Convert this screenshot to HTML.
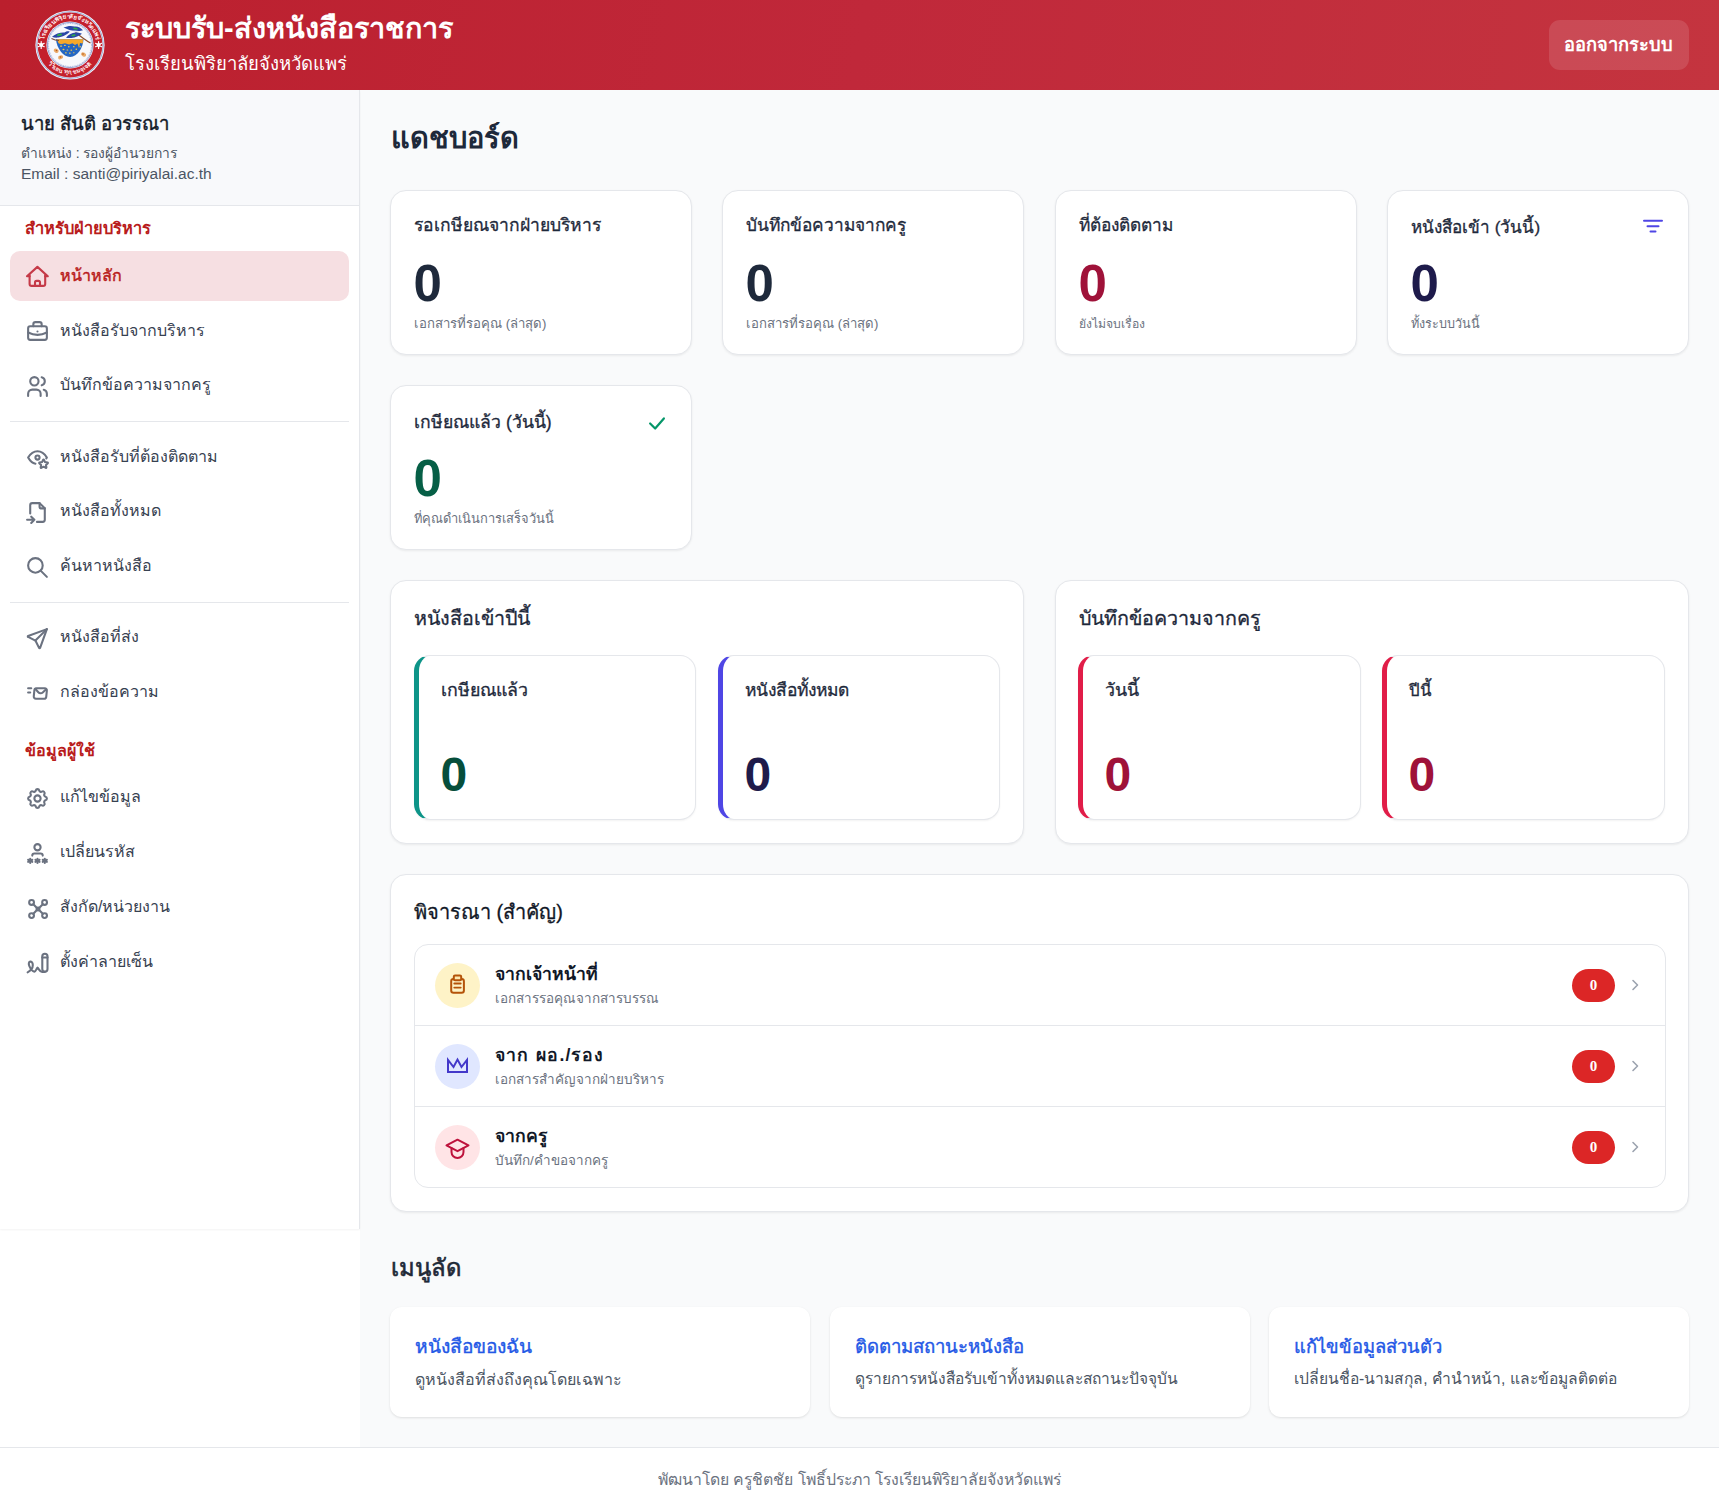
<!DOCTYPE html>
<html lang="th">
<head>
<meta charset="utf-8">
<title>ระบบรับ-ส่งหนังสือราชการ</title>
<style>
*{box-sizing:border-box;margin:0;padding:0}
html,body{width:1719px;height:1512px;overflow:hidden;background:#fff}
body{font-family:"Liberation Sans",sans-serif;position:relative;color:#1f2937}
.abs{position:absolute}
.t{position:absolute;white-space:nowrap;line-height:1}
/* header */
#hdr{left:0;top:0;width:1719px;height:90px;background:linear-gradient(100deg,#bb1f2d 0%,#c0283a 50%,#c4343f 100%)}
#logout{left:1549px;top:20px;width:140px;height:50px;border-radius:11px;background:rgba(255,255,255,0.12)}
/* sidebar */
#side{left:0;top:90px;width:360px;height:1139px;background:#fff;border-right:1px solid #e5e7eb;box-shadow:0 1px 2px rgba(0,0,0,0.05)}
#user{left:0;top:90px;width:359px;height:116px;background:#f8f9fb;border-bottom:1px solid #e5e7eb}
.nav-ic{position:absolute;width:25px;height:25px;left:24.6px}
.nav-ic svg{width:25px;height:25px;display:block}
.divider{position:absolute;left:10px;width:339px;height:1px;background:#e5e7eb}
/* main */
#main{left:360px;top:90px;width:1359px;height:1357px;background:#f9fafb}
.card{position:absolute;background:#fff;border:1px solid #e5e7eb;border-radius:16px;box-shadow:0 1px 3px rgba(0,0,0,0.04),0 1px 2px rgba(0,0,0,0.03)}
.stitle{font-weight:400;color:#1e293b;-webkit-text-stroke:0.3px currentColor}
.semi{font-weight:400;-webkit-text-stroke:0.3px currentColor}
.num{font-weight:700}
.sub{color:#6b7280}
#footer{left:0;top:1447px;width:1719px;height:65px;border-top:1px solid #e5e7eb;background:#fff}
</style>
</head>
<body>
<!-- HEADER -->
<div id="hdr" class="abs"></div>
<svg class="abs" style="left:35.1px;top:10px" width="70" height="70" viewBox="0 0 70 70">
<defs>
<path id="arcTop" d="M8.5,35 A26.5,26.5 0 0 1 61.5,35"/>
<path id="arcBot" d="M6,35 A29,29 0 0 0 64,35"/>
</defs>
<circle cx="35" cy="35" r="34.6" fill="#f4f6fb"/>
<circle cx="35" cy="35" r="33.3" fill="none" stroke="#7486c4" stroke-width="0.7"/>
<circle cx="35" cy="35" r="32.4" fill="#c4202c"/>
<circle cx="35" cy="35" r="23.6" fill="#f7f8fc"/>
<circle cx="35" cy="35" r="22.6" fill="none" stroke="#5466b0" stroke-width="0.6"/>
<circle cx="35" cy="35" r="21.5" fill="none" stroke="#7a8ac8" stroke-width="0.6" stroke-dasharray="1 0.8"/>
<text font-family="Liberation Sans,sans-serif" font-size="6.2" fill="#ffe9ec" font-weight="700"><textPath href="#arcTop" startOffset="50%" text-anchor="middle">โรงเรียนพิริยาลัยจังหวัดแพร่</textPath></text>
<text font-family="Liberation Sans,sans-serif" font-size="5.8" fill="#ffe9ec" font-weight="700" letter-spacing="0.3"><textPath href="#arcBot" startOffset="50%" text-anchor="middle">วิริเยน ทุกฺขมจฺเจติ</textPath></text>
<g fill="#fff">
<circle cx="6.2" cy="35" r="2.1"/><circle cx="63.6" cy="35" r="2.1"/>
</g>
<g stroke="#fff" stroke-width="1.2" stroke-linecap="round">
<path d="M6.2 31.6v6.8M3.2 33.3l6 3.4M3.2 36.7l6-3.4"/>
<path d="M63.6 31.6v6.8M60.6 33.3l6 3.4M60.6 36.7l6-3.4"/>
</g>
<path d="M21 29.3 L48.5 29.2 C48.2 37.5 42.5 46.8 35.2 46.9 C28 46.9 21.8 38.5 21 29.3Z" fill="#2466c2"/>
<path d="M22 29.3 L48 29.2 L47.8 33.5 L45 33 L44 38 L42.5 33.5 L40 35 L37.5 33.2 L34 34.5 L30 33.2 L26 34.2 L23.5 33.3Z" fill="#f7a928"/>
<g fill="#f2c94c">
<rect x="25" y="35.5" width="2.2" height="1.2" rx="0.6"/><rect x="29" y="34.8" width="1.8" height="1.2" rx="0.6"/><rect x="33" y="36" width="1.6" height="1.4" rx="0.7"/>
<rect x="38" y="36" width="1.6" height="1.3" rx="0.6"/><rect x="27.5" y="38.8" width="2" height="1.4" rx="0.7"/><rect x="31.5" y="39.4" width="1.8" height="1.2" rx="0.6"/>
<rect x="35.5" y="39.6" width="1.6" height="1.2" rx="0.6"/><rect x="40.5" y="38.6" width="1.6" height="1.3" rx="0.6"/><rect x="30" y="42.2" width="1.8" height="1.2" rx="0.6"/>
<rect x="34" y="42.6" width="1.6" height="1.2" rx="0.6"/><rect x="38" y="42.2" width="1.6" height="1.1" rx="0.6"/><rect x="44.5" y="36" width="1.4" height="1.4" rx="0.6"/>
</g>
<path d="M16.5 28.5 C19 29.8 21 30.4 24 30.5" fill="none" stroke="#7a4a3a" stroke-width="1.1"/>
<path d="M40.5 22.5 C44 25 47 27.5 50 29.5 C52 31 53.5 32 55.5 33" fill="none" stroke="#8a4b2a" stroke-width="1.2"/>
<g transform="translate(1.5 5)">
<path d="M15.5 21.8 C19 18.5 24 17.2 28 17.5 C30 16 31.5 15.8 33.5 16.6 C30 19.8 27.5 21.6 22 22.5 C19.5 22.8 17.5 22.6 15.5 21.8Z" fill="#2a47a6"/>
<path d="M27 12.6 C31 10.8 35 10.5 38 11.6 C41 11 44 12.5 46.5 15.2 C42 16.6 37 16.5 33 15 C31 14.3 29 13.6 27 12.6Z" fill="#2a47a6"/>
<path d="M29.5 22.8 C32 19.6 35.5 17.8 39 17.6 C41.5 17.4 43.5 18.2 45.5 18.8 C42.5 21.2 39 22.6 35 23 C33 23.2 31 23.1 29.5 22.8Z" fill="#2a47a6"/>
<path d="M33 16.5 C36 15.5 40 15.6 44.5 17.4" fill="none" stroke="#f7f8fc" stroke-width="0.7"/>
<g fill="#2fae4a"><ellipse cx="23" cy="19.8" rx="2.6" ry="1" transform="rotate(-15 23 19.8)"/><ellipse cx="39" cy="13.6" rx="2.4" ry="0.9" transform="rotate(10 39 13.6)"/><ellipse cx="37" cy="20.3" rx="2.2" ry="0.9" transform="rotate(-10 37 20.3)"/></g>
</g>
<g fill="#e9a25a" opacity="0.9">
<ellipse cx="21.2" cy="40.8" rx="2.6" ry="2" transform="rotate(30 21.2 40.8)"/>
<ellipse cx="25.6" cy="47.3" rx="2.6" ry="1.9" transform="rotate(-20 25.6 47.3)"/>
<ellipse cx="48.6" cy="44.5" rx="2.7" ry="1.9" transform="rotate(30 48.6 44.5)"/>
</g>
<g fill="#b45a1e"><circle cx="21.5" cy="40.5" r="0.8"/><circle cx="25.5" cy="47" r="0.8"/><circle cx="48" cy="44" r="0.8"/></g>
</svg>

<div class="t" style="left:125px;top:14.1px;font-size:28.8px;font-weight:700;color:#fff">ระบบรับ-ส่งหนังสือราชการ</div>
<div class="t" style="left:125px;top:55px;font-size:18.5px;color:#fff">โรงเรียนพิริยาลัยจังหวัดแพร่</div>
<div id="logout" class="abs"></div>
<div class="t" style="left:1564px;top:35.5px;font-size:18.3px;font-weight:700;color:#fff">ออกจากระบบ</div>

<div id="main" class="abs"></div>
<!-- SIDEBAR -->
<div id="side" class="abs"></div>
<div id="user" class="abs"></div>
<div class="t" style="left:21px;top:115px;font-size:18.5px;font-weight:400;-webkit-text-stroke:0.45px #111827;color:#111827">นาย สันติ อวรรณา</div>
<div class="t" style="left:21px;top:147px;font-size:13.8px;color:#4b5563">ตำแหน่ง : รองผู้อำนวยการ</div>
<div class="t" style="left:21px;top:165.7px;font-size:15.5px;color:#4b5563">Email : santi@piriyalai.ac.th</div>

<div class="t" style="left:25px;top:220.1px;font-size:16.4px;font-weight:700;color:#b91c1c">สำหรับฝ่ายบริหาร</div>
<div class="abs" style="left:10px;top:251px;width:339px;height:50px;border-radius:10px;background:#f6dfe2"></div>
<svg class="abs" style="left:20px;top:258px" width="35" height="35" viewBox="20 258 35 35" fill="none" stroke="#c53a48" stroke-width="2.1" stroke-linecap="round" stroke-linejoin="round"><path d="M29.6 276.3H27l10.4-9.4 10.4 9.4h-2.6"/><path d="M29.6 275v8.9a2 2 0 0 0 2 2h11.6a2 2 0 0 0 2-2V275"/><path d="M35 285.9v-3.4a1.6 1.6 0 0 1 1.6-1.6h1.8a1.6 1.6 0 0 1 1.6 1.6v3.4"/></svg>
<div class="t nl" style="left:60px;top:267.9px;font-size:16px;font-weight:400;-webkit-text-stroke:0.45px #b91c1c;color:#b91c1c">หน้าหลัก</div>
<div class="nav-ic" style="top:319.0px"><svg viewBox="0 0 24 24" fill="none" stroke="#6b7280" stroke-width="2" stroke-linecap="round" stroke-linejoin="round"><path d="M3 9a2 2 0 0 1 2-2h14a2 2 0 0 1 2 2v9a2 2 0 0 1-2 2H5a2 2 0 0 1-2-2z"/><path d="M8 7V5a2 2 0 0 1 2-2h4a2 2 0 0 1 2 2v2"/><path d="M12 12v.01"/><path d="M3 13a20 20 0 0 0 18 0"/></svg></div>
<div class="t nl" style="left:60px;top:322.9px;font-size:16px;font-weight:400;color:#374151">หนังสือรับจากบริหาร</div>
<div class="nav-ic" style="top:373.5px"><svg viewBox="0 0 24 24" fill="none" stroke="#6b7280" stroke-width="2" stroke-linecap="round" stroke-linejoin="round"><circle cx="9" cy="7" r="4"/><path d="M3 21v-2a4 4 0 0 1 4-4h4a4 4 0 0 1 4 4v2"/><path d="M16 3.13a4 4 0 0 1 0 7.75"/><path d="M21 21v-2a4 4 0 0 0-3-3.85"/></svg></div>
<div class="t nl" style="left:60px;top:377.4px;font-size:16px;font-weight:400;color:#374151">บันทึกข้อความจากครู</div>
<div class="nav-ic" style="top:445.0px"><svg viewBox="0 0 24 24" fill="none" stroke="#6b7280" stroke-width="2" stroke-linecap="round" stroke-linejoin="round"><path d="M10 12a2 2 0 1 0 4 0a2 2 0 0 0-4 0"/><path d="M10.01 17.95C7.36 17.56 5 15.58 3 12c2.4-4 5.4-6 9-6s6.6 2 9 6l-.56.88"/><path d="M17.8 20.82l-2.17 1.14a.39.39 0 0 1-.57-.41l.42-2.41-1.76-1.71a.39.39 0 0 1 .22-.67l2.43-.35 1.09-2.19a.39.39 0 0 1 .7 0l1.09 2.19 2.43.35a.39.39 0 0 1 .22.67l-1.76 1.71.41 2.41a.39.39 0 0 1-.57.41z"/></svg></div>
<div class="t nl" style="left:60px;top:448.9px;font-size:16px;font-weight:400;color:#374151">หนังสือรับที่ต้องติดตาม</div>
<div class="nav-ic" style="top:499.5px"><svg viewBox="0 0 24 24" fill="none" stroke="#6b7280" stroke-width="2" stroke-linecap="round" stroke-linejoin="round"><path d="M14 3v4a1 1 0 0 0 1 1h4"/><path d="M5 13V5a2 2 0 0 1 2-2h7l5 5v11a2 2 0 0 1-2 2h-5.5M2 19h7m-3-3 3 3-3 3"/></svg></div>
<div class="t nl" style="left:60px;top:503.4px;font-size:16px;font-weight:400;color:#374151">หนังสือทั้งหมด</div>
<div class="nav-ic" style="top:554.5px"><svg viewBox="0 0 24 24" fill="none" stroke="#6b7280" stroke-width="2" stroke-linecap="round" stroke-linejoin="round"><circle cx="10" cy="10" r="7"/><path d="M21 21l-6-6"/></svg></div>
<div class="t nl" style="left:60px;top:558.4px;font-size:16px;font-weight:400;color:#374151">ค้นหาหนังสือ</div>
<div class="nav-ic" style="top:625.5px"><svg viewBox="0 0 24 24" fill="none" stroke="#6b7280" stroke-width="2" stroke-linecap="round" stroke-linejoin="round"><path d="M10 14 21 3"/><path d="M21 3l-6.5 18a.55.55 0 0 1-1 0L10 14l-7-3.5a.55.55 0 0 1 0-1L21 3"/></svg></div>
<div class="t nl" style="left:60px;top:629.4px;font-size:16px;font-weight:400;color:#374151">หนังสือที่ส่ง</div>
<div class="nav-ic" style="top:680.5px"><svg viewBox="0 0 24 24" fill="none" stroke="#6b7280" stroke-width="2" stroke-linecap="round" stroke-linejoin="round"><path d="M3 7h3"/><path d="M3 11h2"/><path d="M9.02 8.8l-.6 6A2 2 0 0 0 10.41 17h7.98a2 2 0 0 0 1.99-1.8l.6-6A2 2 0 0 0 18.99 7h-7.98a2 2 0 0 0-1.99 1.8z"/><path d="M9.8 7.5l2.98 3.28a3 3 0 0 0 4.24.2L20.3 8"/></svg></div>
<div class="t nl" style="left:60px;top:684.4px;font-size:16px;font-weight:400;color:#374151">กล่องข้อความ</div>
<div class="nav-ic" style="top:785.5px"><svg viewBox="0 0 24 24" fill="none" stroke="#6b7280" stroke-width="2" stroke-linecap="round" stroke-linejoin="round"><path d="M10.33 4.32c.43-1.76 2.92-1.76 3.35 0a1.72 1.72 0 0 0 2.57 1.07c1.54-.94 3.31.83 2.37 2.37a1.72 1.72 0 0 0 1.07 2.57c1.76.43 1.76 2.92 0 3.35a1.72 1.72 0 0 0-1.07 2.57c.94 1.54-.83 3.31-2.37 2.37a1.72 1.72 0 0 0-2.57 1.07c-.43 1.76-2.92 1.76-3.35 0a1.72 1.72 0 0 0-2.57-1.07c-1.54.94-3.31-.83-2.37-2.37a1.72 1.72 0 0 0-1.07-2.57c-1.76-.43-1.76-2.92 0-3.35a1.72 1.72 0 0 0 1.07-2.57c-.94-1.54.83-3.31 2.37-2.37 1 .61 2.3.07 2.57-1.07z"/><circle cx="12" cy="12" r="3"/></svg></div>
<div class="t nl" style="left:60px;top:789.4px;font-size:16px;font-weight:400;color:#374151">แก้ไขข้อมูล</div>
<div class="nav-ic" style="top:840.5px"><svg viewBox="0 0 24 24" fill="none" stroke="#6b7280" stroke-width="2" stroke-linecap="round" stroke-linejoin="round"><path d="M12 17v4"/><path d="M10 20l4-2"/><path d="M10 18l4 2"/><path d="M5 17v4"/><path d="M3 20l4-2"/><path d="M3 18l4 2"/><path d="M19 17v4"/><path d="M17 20l4-2"/><path d="M17 18l4 2"/><circle cx="12" cy="6" r="3"/><path d="M7 14a2 2 0 0 1 2-2h6a2 2 0 0 1 2 2"/></svg></div>
<div class="t nl" style="left:60px;top:844.4px;font-size:16px;font-weight:400;color:#374151">เปลี่ยนรหัส</div>
<div class="nav-ic" style="top:895.5px"><svg viewBox="0 0 24 24" fill="none" stroke="#6b7280" stroke-width="2" stroke-linecap="round" stroke-linejoin="round"><circle cx="6.3" cy="6.2" r="2.3"/><circle cx="18.8" cy="6.2" r="2.3"/><circle cx="6.3" cy="18.8" r="2.3"/><circle cx="18.8" cy="18.8" r="2.3"/><path d="M12.5 11 14 12.5 12.5 14 11 12.5z"/><path d="M8 7.9 11 11M17.1 7.9 14 11M8 17.1 11 14M17.1 17.1 14 14"/></svg></div>
<div class="t nl" style="left:60px;top:899.4px;font-size:16px;font-weight:400;color:#374151">สังกัด/หน่วยงาน</div>
<div class="nav-ic" style="top:950.5px"><svg viewBox="0 0 24 24" fill="none" stroke="#6b7280" stroke-width="2" stroke-linecap="round" stroke-linejoin="round"><path d="M2.5 20.5C4.5 19.5 7.5 17 7.5 13.5 7.5 11 6 10 5 10.2 3.5 10.5 3.3 12.5 4.2 14.5 5.5 17.5 7.5 19.5 9 19.8 10.5 20 11 16.5 12 16 13 16.5 14 20 16.5 20.2H19"/><rect x="16.6" y="2.6" width="5" height="17.2" rx="2.5"/><path d="M16.6 6.2h5"/></svg></div>
<div class="t nl" style="left:60px;top:954.4px;font-size:16px;font-weight:400;color:#374151">ตั้งค่าลายเซ็น</div>
<div class="divider" style="top:421px"></div>
<div class="divider" style="top:602px"></div>
<div class="t" style="left:25px;top:742.3px;font-size:16.1px;font-weight:700;color:#b91c1c">ข้อมูลผู้ใช้</div>
<div class="t" style="left:391px;top:124.05px;font-size:29px;font-weight:700;color:#1e293b">แดชบอร์ด</div>
<div class="card" style="left:390px;top:190px;width:302px;height:165px"></div>
<div class="t stitle" style="left:414px;top:217.03px;font-size:17.5px">รอเกษียณจากฝ่ายบริหาร</div>
<div class="t num" style="left:413.5px;top:258.4px;font-size:51px;color:#1e293b">0</div>
<div class="t sub" style="left:414px;top:317.48px;font-size:13.2px">เอกสารที่รอคุณ (ล่าสุด)</div>
<div class="card" style="left:722px;top:190px;width:302px;height:165px"></div>
<div class="t stitle" style="left:746px;top:217.19px;font-size:17.3px">บันทึกข้อความจากครู</div>
<div class="t num" style="left:745.5px;top:258.4px;font-size:51px;color:#1e293b">0</div>
<div class="t sub" style="left:746px;top:317.48px;font-size:13.2px">เอกสารที่รอคุณ (ล่าสุด)</div>
<div class="card" style="left:1055px;top:190px;width:302px;height:165px"></div>
<div class="t stitle" style="left:1079px;top:217.24px;font-size:17.25px">ที่ต้องติดตาม</div>
<div class="t num" style="left:1078.5px;top:258.4px;font-size:51px;color:#9f1239">0</div>
<div class="t sub" style="left:1079px;top:318.33px;font-size:12.2px">ยังไม่จบเรื่อง</div>
<div class="card" style="left:1387px;top:190px;width:302px;height:165px"></div>
<div class="t stitle" style="left:1411px;top:219.47px;font-size:17.1px">หนังสือเข้า (วันนี้)</div>
<div class="t num" style="left:1410.5px;top:258.4px;font-size:51px;color:#1e1b4b">0</div>
<div class="t sub" style="left:1411px;top:317.99px;font-size:12.6px">ทั้งระบบวันนี้</div>
<svg class="abs" style="left:1641px;top:218px" width="24" height="18" viewBox="0 0 24 18" fill="none" stroke="#4f46e5" stroke-width="2" stroke-linecap="round"><path d="M3 2.8h18M6.5 8.3h11M9.5 13.5h5"/></svg>
<div class="card" style="left:390px;top:385px;width:302px;height:165px"></div>
<div class="t stitle" style="left:414px;top:414.04px;font-size:17.6px">เกษียณแล้ว (วันนี้)</div>
<div class="t num" style="left:413.5px;top:453.4px;font-size:51px;color:#065f46">0</div>
<div class="t sub" style="left:414px;top:512.74px;font-size:12.9px">ที่คุณดำเนินการเสร็จวันนี้</div>
<svg class="abs" style="left:646px;top:412px" width="22" height="22" viewBox="0 0 24 24" fill="none" stroke="#059669" stroke-width="2.4" stroke-linecap="round" stroke-linejoin="round"><path d="M4.5 12.5l5.5 5.5 9.5-11"/></svg>
<div class="card" style="left:390px;top:580px;width:634px;height:264px"></div>
<div class="t stitle" style="left:414px;top:608.96px;font-size:19.7px;color:#1e293b">หนังสือเข้าปีนี้</div>
<div class="abs" style="left:414px;top:655px;width:282px;height:165px;border-radius:16px;background:#fff;border:1px solid #e5e7eb;border-left:5px solid #0d9488;box-shadow:0 1px 2px rgba(0,0,0,0.05)"></div>
<div class="t stitle" style="left:441px;top:681.87px;font-size:17.8px">เกษียณแล้ว</div>
<div class="t num" style="left:440.5px;top:751px;font-size:48px;color:#064e3b">0</div>
<div class="abs" style="left:718px;top:655px;width:282px;height:165px;border-radius:16px;background:#fff;border:1px solid #e5e7eb;border-left:5px solid #4f46e5;box-shadow:0 1px 2px rgba(0,0,0,0.05)"></div>
<div class="t stitle" style="left:745px;top:682.21px;font-size:17.4px">หนังสือทั้งหมด</div>
<div class="t num" style="left:744.5px;top:751px;font-size:48px;color:#1e1b4b">0</div>
<div class="card" style="left:1055px;top:580px;width:634px;height:264px"></div>
<div class="t stitle" style="left:1079px;top:608.96px;font-size:19.7px;color:#1e293b">บันทึกข้อความจากครู</div>
<div class="abs" style="left:1078px;top:655px;width:283px;height:165px;border-radius:16px;background:#fff;border:1px solid #e5e7eb;border-left:5px solid #e11d48;box-shadow:0 1px 2px rgba(0,0,0,0.05)"></div>
<div class="t stitle" style="left:1105px;top:681.87px;font-size:17.8px">วันนี้</div>
<div class="t num" style="left:1104.5px;top:751px;font-size:48px;color:#9f1239">0</div>
<div class="abs" style="left:1382px;top:655px;width:283px;height:165px;border-radius:16px;background:#fff;border:1px solid #e5e7eb;border-left:5px solid #e11d48;box-shadow:0 1px 2px rgba(0,0,0,0.05)"></div>
<div class="t stitle" style="left:1409px;top:682.72px;font-size:16.8px">ปีนี้</div>
<div class="t num" style="left:1408.5px;top:751px;font-size:48px;color:#9f1239">0</div>
<div class="card" style="left:390px;top:874px;width:1299px;height:338px"></div>
<div class="t stitle" style="left:414px;top:901.8px;font-size:20px;color:#111827">พิจารณา (สำคัญ)</div>
<div class="abs" style="left:414px;top:944px;width:1252px;height:244px;border:1px solid #e5e7eb;border-radius:14px;background:#fff"></div>
<div class="abs" style="left:415px;top:1025px;width:1250px;height:1px;background:#e5e7eb"></div>
<div class="abs" style="left:415px;top:1106px;width:1250px;height:1px;background:#e5e7eb"></div>
<div class="abs" style="left:435px;top:963.3px;width:45px;height:45px;border-radius:50%;background:#fef3c7"></div>
<svg class="abs" style="left:440px;top:944px" width="35" height="64" viewBox="440 0 35 64" fill="none" stroke="#b45309" stroke-width="2" stroke-linecap="round" stroke-linejoin="round"><rect x="451.2" y="35" width="12.7" height="13.8" rx="2.3"/><rect x="453.8" y="31.6" width="7.4" height="4.6" rx="1.2" fill="#fde8b0"/><path d="M454.3 39.5h6.4M454.3 43.6h6.4" stroke-width="1.9"/></svg>
<div class="t" style="left:495px;top:965.74px;font-size:17.6px;font-weight:700;color:#111827;">จากเจ้าหน้าที่</div>
<div class="t sub" style="left:495px;top:992.32px;font-size:13.5px;color:#6b7280">เอกสารรอคุณจากสารบรรณ</div>
<div class="abs" style="left:1572px;top:969px;width:43px;height:33px;border-radius:17px;background:#dc2626"></div>
<div class="t" style="left:1572px;top:978.3px;width:43px;text-align:center;font-family:'Liberation Serif',serif;font-size:15px;font-weight:700;color:#fff">0</div>
<svg class="abs" style="left:1627px;top:977px" width="16" height="16" viewBox="0 0 16 16" fill="none" stroke="#9ca3af" stroke-width="1.6" stroke-linecap="round" stroke-linejoin="round"><path d="M6 3.5 10.5 8 6 12.5"/></svg>
<div class="abs" style="left:435px;top:1044.3px;width:45px;height:45px;border-radius:50%;background:#e0e7ff"></div>
<svg class="abs" style="left:440px;top:1025px" width="35" height="64" viewBox="440 0 35 64" fill="none" stroke="#4338ca" stroke-width="2" stroke-linecap="round" stroke-linejoin="round"><path d="M448 47V35l5.5 7 4-7.5 4 7.5 5.5-7v12z" stroke-linejoin="miter" stroke-linecap="butt"/></svg>
<div class="t" style="left:495px;top:1046.74px;font-size:17.6px;font-weight:700;color:#111827;word-spacing:1px;letter-spacing:1.1px;">จาก ผอ./รอง</div>
<div class="t sub" style="left:495px;top:1073.33px;font-size:13.5px;color:#6b7280">เอกสารสำคัญจากฝ่ายบริหาร</div>
<div class="abs" style="left:1572px;top:1050px;width:43px;height:33px;border-radius:17px;background:#dc2626"></div>
<div class="t" style="left:1572px;top:1059.3px;width:43px;text-align:center;font-family:'Liberation Serif',serif;font-size:15px;font-weight:700;color:#fff">0</div>
<svg class="abs" style="left:1627px;top:1058px" width="16" height="16" viewBox="0 0 16 16" fill="none" stroke="#9ca3af" stroke-width="1.6" stroke-linecap="round" stroke-linejoin="round"><path d="M6 3.5 10.5 8 6 12.5"/></svg>
<div class="abs" style="left:435px;top:1125.3px;width:45px;height:45px;border-radius:50%;background:#ffe4e6"></div>
<svg class="abs" style="left:440px;top:1106px" width="35" height="64" viewBox="440 0 35 64" fill="none" stroke="#be123c" stroke-width="2" stroke-linecap="round" stroke-linejoin="round"><path d="M446.5 39.4 457.5 33.7 468.5 39.4 457.5 45.2z"/><path d="M451.5 42v4a6 6 0 0 0 12 0v-4"/></svg>
<div class="t" style="left:495px;top:1127.74px;font-size:17.6px;font-weight:700;color:#111827;">จากครู</div>
<div class="t sub" style="left:495px;top:1154.33px;font-size:13.5px;color:#6b7280">บันทึก/คำขอจากครู</div>
<div class="abs" style="left:1572px;top:1131px;width:43px;height:33px;border-radius:17px;background:#dc2626"></div>
<div class="t" style="left:1572px;top:1140.3px;width:43px;text-align:center;font-family:'Liberation Serif',serif;font-size:15px;font-weight:700;color:#fff">0</div>
<svg class="abs" style="left:1627px;top:1139px" width="16" height="16" viewBox="0 0 16 16" fill="none" stroke="#9ca3af" stroke-width="1.6" stroke-linecap="round" stroke-linejoin="round"><path d="M6 3.5 10.5 8 6 12.5"/></svg>
<div class="t" style="left:391px;top:1256.37px;font-size:23.8px;font-weight:400;color:#1f2937;-webkit-text-stroke:0.6px #1f2937">เมนูลัด</div>
<div class="abs" style="left:390px;top:1307px;width:420px;height:110px;border-radius:12px;background:#fff;box-shadow:0 1px 3px rgba(0,0,0,0.08),0 1px 2px rgba(0,0,0,0.04)"></div>
<div class="t" style="left:415px;top:1337.37px;font-size:19.1px;font-weight:400;-webkit-text-stroke:0.4px #2358e6;color:#2358e6">หนังสือของฉัน</div>
<div class="t" style="left:415px;top:1370.82px;font-size:16.1px;color:#4b5563">ดูหนังสือที่ส่งถึงคุณโดยเฉพาะ</div>
<div class="abs" style="left:830px;top:1307px;width:420px;height:110px;border-radius:12px;background:#fff;box-shadow:0 1px 3px rgba(0,0,0,0.08),0 1px 2px rgba(0,0,0,0.04)"></div>
<div class="t" style="left:855px;top:1337.79px;font-size:18.6px;font-weight:400;-webkit-text-stroke:0.4px #2358e6;color:#2358e6">ติดตามสถานะหนังสือ</div>
<div class="t" style="left:855px;top:1371.28px;font-size:15.55px;color:#4b5563">ดูรายการหนังสือรับเข้าทั้งหมดและสถานะปัจจุบัน</div>
<div class="abs" style="left:1269px;top:1307px;width:420px;height:110px;border-radius:12px;background:#fff;box-shadow:0 1px 3px rgba(0,0,0,0.08),0 1px 2px rgba(0,0,0,0.04)"></div>
<div class="t" style="left:1294px;top:1338.0px;font-size:18.35px;font-weight:400;-webkit-text-stroke:0.4px #2358e6;color:#2358e6">แก้ไขข้อมูลส่วนตัว</div>
<div class="t" style="left:1294px;top:1371.2px;font-size:15.65px;color:#4b5563">เปลี่ยนชื่อ-นามสกุล, คำนำหน้า, และข้อมูลติดต่อ</div>
<div id="footer" class="abs"></div>
<div class="t" style="left:0;top:1471.8px;width:1719px;text-align:center;font-size:15.8px;color:#6b7280">พัฒนาโดย ครูชิตชัย โพธิ์ประภา โรงเรียนพิริยาลัยจังหวัดแพร่</div>

</body>
</html>
